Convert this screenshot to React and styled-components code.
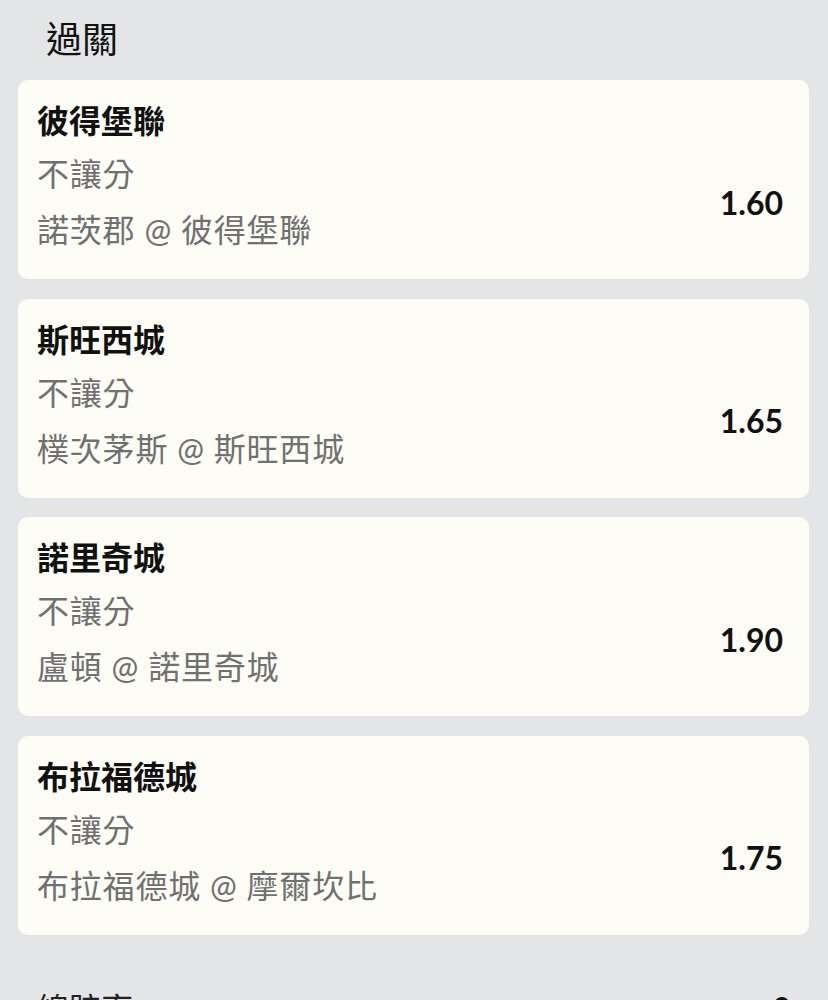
import React from "react";
import styled, { createGlobalStyle } from "styled-components";

const GlobalStyle = createGlobalStyle`
  html, body {
    margin: 0;
    padding: 0;
    background: #e4e5e7;
  }
  body {
    font-family: Lato, "Noto Sans CJK TC", "Noto Sans", sans-serif;
    -webkit-font-smoothing: antialiased;
  }
`;

const Page = styled.div`
  width: 828px;
  box-sizing: border-box;
  padding: 15px 19px 0 18px;
  background: #e4e5e7;
  min-height: 1000px;
`;

const Header = styled.h1`
  margin: 0 0 17px;
  padding-left: 28px;
  font-size: 36px;
  line-height: 48px;
  font-weight: 400;
  color: #111;
`;

const List = styled.div`
  display: flex;
  flex-direction: column;
  gap: 19.5px;
`;

const Card = styled.div`
  background: #fefdf5;
  border-radius: 10px;
  padding: 16px 26px 21px 19px;
  display: flex;
  flex-direction: column;
`;

const Team = styled.div`
  font-size: 32px;
  line-height: 50px;
  font-weight: 700;
  color: #111;
`;

const Body = styled.div`
  display: flex;
  align-items: center;
  justify-content: space-between;
`;

const Lines = styled.div`
  display: flex;
  flex-direction: column;
`;

const Sub = styled.div`
  font-size: 32px;
  line-height: 56px;
  font-weight: 400;
  letter-spacing: 0.8px;
  color: #707070;
`;

const Odds = styled.div`
  font-size: 32px;
  font-weight: 700;
  color: #111;
`;

const TotalRow = styled.div`
  display: flex;
  justify-content: space-between;
  align-items: center;
  margin-top: 49px;
  padding: 0 18px 0 19px;
  font-size: 32px;
  line-height: 50px;
  color: #222;
`;

const TotalValue = styled.span`
  font-weight: 700;
  color: #111;
`;

const bets = [
  { team: "彼得堡聯", type: "不讓分", match: "諾茨郡 @ 彼得堡聯", odds: "1.60" },
  { team: "斯旺西城", type: "不讓分", match: "樸次茅斯 @ 斯旺西城", odds: "1.65" },
  { team: "諾里奇城", type: "不讓分", match: "盧頓 @ 諾里奇城", odds: "1.90" },
  { team: "布拉福德城", type: "不讓分", match: "布拉福德城 @ 摩爾坎比", odds: "1.75" },
];

export default function App() {
  return (
    <>
      <GlobalStyle />
      <Page>
        <Header>過關</Header>
        <List>
          {bets.map((b) => (
            <Card key={b.team}>
              <Team>{b.team}</Team>
              <Body>
                <Lines>
                  <Sub>{b.type}</Sub>
                  <Sub>{b.match}</Sub>
                </Lines>
                <Odds>{b.odds}</Odds>
              </Body>
            </Card>
          ))}
        </List>
        <TotalRow>
          <span>總賠率</span>
          <TotalValue>0</TotalValue>
        </TotalRow>
      </Page>
    </>
  );
}
